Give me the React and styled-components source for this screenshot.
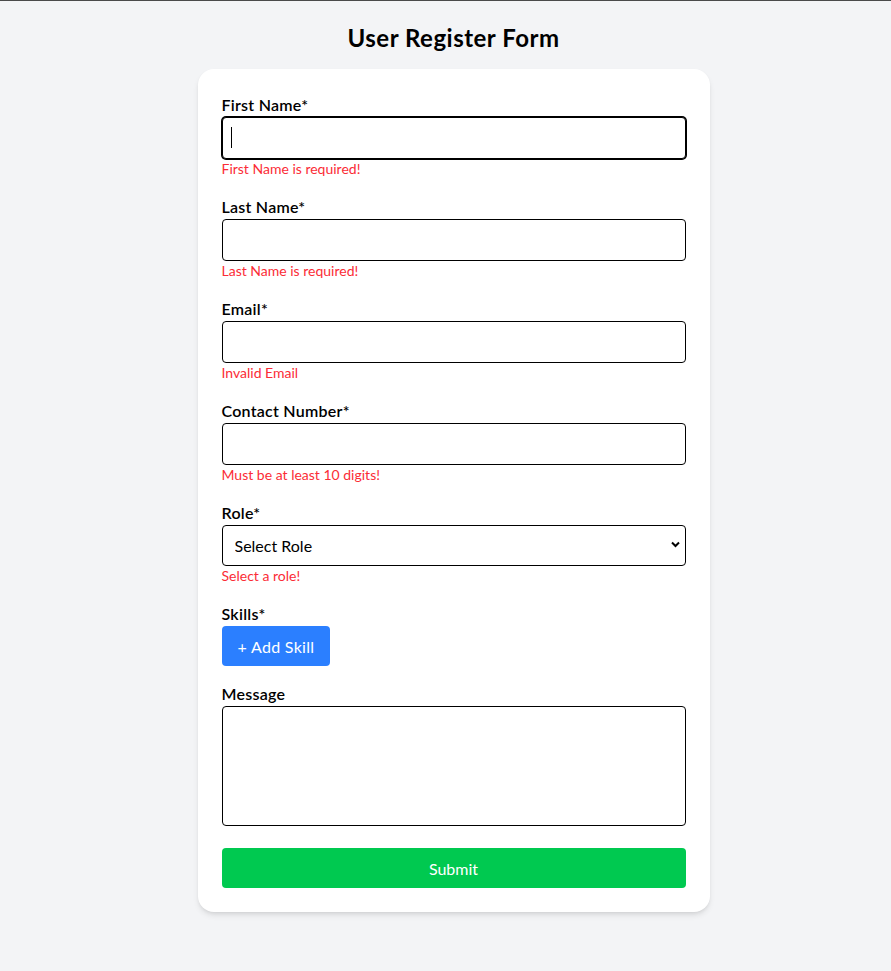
import React from "react";
import styled, { createGlobalStyle } from "styled-components";

const GlobalStyle = createGlobalStyle`
  * { box-sizing: border-box; }
  html, body { margin: 0; padding: 0; overflow-x: hidden; }
  body {
    background: #f3f4f6;
    font-family: "Segoe UI", Lato, "Noto Sans", sans-serif;
    color: #000;
  }
`;

const TopRule = styled.div`
  height: 1px;
  background: #4a4a4a;
`;

const Page = styled.main`
  width: 100vw;
  margin-left: 8px;
  min-height: 970px;
  padding: 20px;
  display: flex;
  flex-direction: column;
  align-items: center;
`;

const Title = styled.h1`
  margin: 0 0 15px;
  padding-top: 1px;
  font-size: 24px;
  line-height: 32px;
  font-weight: 700;
  letter-spacing: 0.5px;
`;

const Card = styled.form`
  width: 512px;
  background: #fff;
  border-radius: 16px;
  padding: 24px;
  box-shadow: 0 4px 6px -1px rgba(0, 0, 0, 0.1), 0 2px 4px -2px rgba(0, 0, 0, 0.1);
  display: flex;
  flex-direction: column;
  gap: 16px;
`;

const Field = styled.div`
  display: flex;
  flex-direction: column;
  align-items: flex-start;
  padding-bottom: ${(p) => p.$extra || 0}px;
`;

const Label = styled.label`
  font-size: 16px;
  line-height: 24px;
  font-weight: 600;
  letter-spacing: 0.25px;
`;

const InputWrap = styled.div`
  position: relative;
  width: 100%;
`;

const Input = styled.input`
  display: block;
  width: 100%;
  height: 42px;
  padding: 8px;
  font: inherit;
  font-size: 16px;
  border: 1px solid #000;
  border-radius: 4px;
  outline: none;
  background: #fff;
  caret-color: transparent;
  box-shadow: ${(p) => (p.$focused ? "0 0 0 1px #000" : "none")};
`;

const Caret = styled.span`
  position: absolute;
  left: 9px;
  top: 10px;
  width: 1px;
  height: 21px;
  background: #000;
  pointer-events: none;
`;

const Select = styled.select`
  appearance: none;
  display: block;
  width: 100%;
  height: 41px;
  padding: 0 30px 0 12px;
  font: inherit;
  font-size: 16px;
  color: #000;
  background: #fff;
  border: 1px solid #000;
  border-radius: 4px;
  outline: none;
`;

const Chevron = styled.svg`
  position: absolute;
  right: 6px;
  top: 16px;
  width: 9px;
  height: 7px;
  pointer-events: none;
`;

const ErrorText = styled.span`
  font-size: 14px;
  line-height: 20px;
  color: #fb2c36;
`;

const AddButton = styled.button`
  height: 40px;
  padding: 0 16px;
  background: #2b7fff;
  color: #fff;
  border: none;
  border-radius: 4px;
  font: inherit;
  font-size: 16px;
  letter-spacing: 0.3px;
  cursor: pointer;
`;

const TextArea = styled.textarea`
  display: block;
  width: 100%;
  height: 120px;
  padding: 8px;
  font: inherit;
  font-size: 16px;
  border: 1px solid #000;
  border-radius: 4px;
  resize: none;
  outline: none;
`;

const SubmitButton = styled.button`
  width: 100%;
  height: 40px;
  background: #00c950;
  color: #fff;
  border: none;
  border-radius: 4px;
  font: inherit;
  font-size: 16px;
  cursor: pointer;
`;

const textFields = [
  { id: "firstName", label: "First Name*", error: "First Name is required!", focused: true },
  { id: "lastName", label: "Last Name*", error: "Last Name is required!" },
  { id: "email", label: "Email*", error: "Invalid Email" },
  { id: "contact", label: "Contact Number*", error: "Must be at least 10 digits!" },
];

export default function App() {
  return (
    <>
      <GlobalStyle />
      <TopRule />
      <Page>
        <Title>User Register Form</Title>
        <Card onSubmit={(e) => e.preventDefault()}>
          {textFields.map((f) => (
            <Field key={f.id}>
              <Label htmlFor={f.id}>{f.label}</Label>
              <InputWrap>
                <Input id={f.id} $focused={f.focused} />
                {f.focused && <Caret />}
              </InputWrap>
              <ErrorText>{f.error}</ErrorText>
            </Field>
          ))}
          <Field>
            <Label htmlFor="role">Role*</Label>
            <InputWrap>
              <Select id="role" defaultValue="">
                <option value="">Select Role</option>
                <option value="dev">Developer</option>
                <option value="design">Designer</option>
              </Select>
              <Chevron viewBox="0 0 9 7">
                <path d="M1 1.5 L4.5 5 L8 1.5" fill="none" stroke="#000" strokeWidth="2" />
              </Chevron>
            </InputWrap>
            <ErrorText>Select a role!</ErrorText>
          </Field>
          <Field>
            <Label>Skills*</Label>
            <AddButton type="button">+ Add Skill</AddButton>
          </Field>
          <Field $extra={6}>
            <Label htmlFor="message">Message</Label>
            <TextArea id="message" />
          </Field>
          <SubmitButton type="submit">Submit</SubmitButton>
        </Card>
      </Page>
    </>
  );
}
